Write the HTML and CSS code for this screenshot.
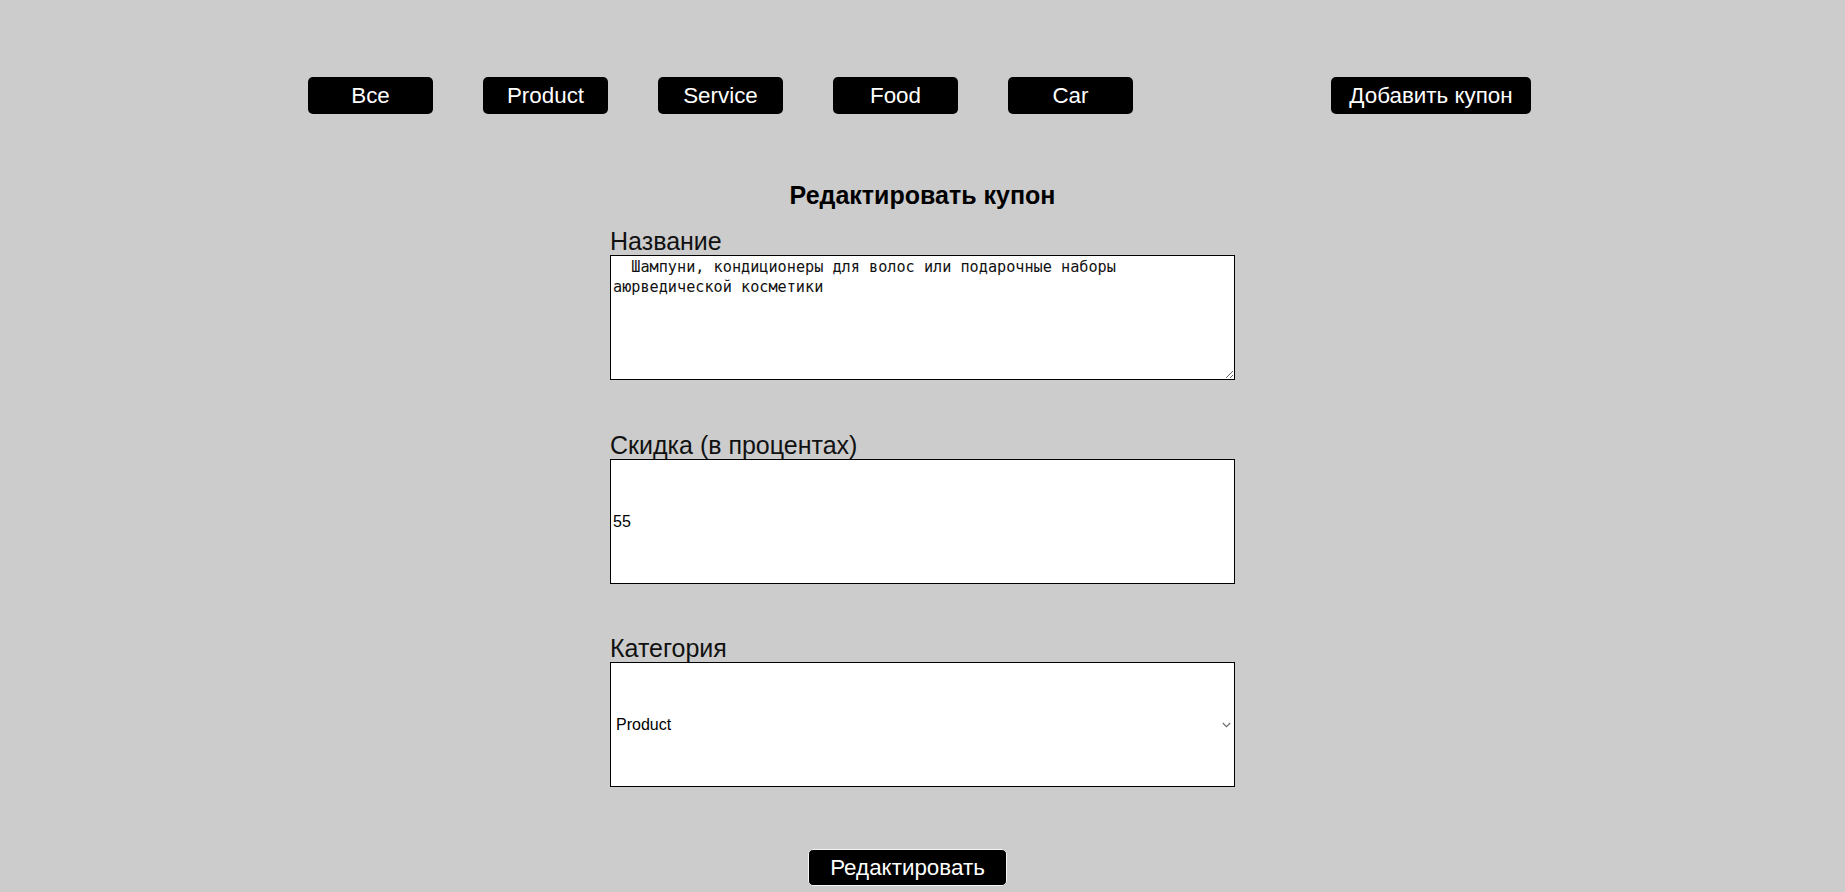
FILE: index.html
```html
<!DOCTYPE html>
<html lang="ru">
<head>
<meta charset="utf-8">
<title>Редактировать купон</title>
<link rel="stylesheet" href="styles.css">
</head>
<body>
<nav class="nav">
  <button class="nav-btn">Все</button>
  <button class="nav-btn">Product</button>
  <button class="nav-btn">Service</button>
  <button class="nav-btn">Food</button>
  <button class="nav-btn">Car</button>
  <button class="nav-btn add-btn">Добавить купон</button>
</nav>
<main class="page">
  <h2 class="title">Редактировать купон</h2>
  <form class="form">
    <label class="label" for="name">Название</label>
    <textarea class="field area" id="name">  Шампуни, кондиционеры для волос или подарочные наборы аюрведической косметики</textarea>
    <label class="label" for="discount">Скидка (в процентах)</label>
    <input class="field input" id="discount" type="text" value="55">
    <label class="label" for="cat">Категория</label>
    <div class="select-wrap">
      <select class="field select" id="cat">
        <option>Product</option>
        <option>Service</option>
        <option>Food</option>
        <option>Car</option>
      </select>
      <svg class="chevron" width="9" height="6" viewBox="0 0 9 6" aria-hidden="true"><path d="M0.8 1 L4.5 4.6 L8.2 1" fill="none" stroke="#6d6d6d" stroke-width="1.2"/></svg>
    </div>
    <div class="actions">
      <button type="button" class="submit">Редактировать</button>
    </div>
  </form>
</main>
</body>
</html>
```
FILE: styles.css
```css
html, body {
  margin: 0;
  padding: 0;
}
body {
  background: #cccccc;
  font-family: "Liberation Sans", Arial, sans-serif;
  color: #000;
  min-height: 892px;
}
.nav {
  display: flex;
  align-items: center;
  gap: 50px;
  padding: 77px 0 0 308px;
}
.nav-btn {
  width: 125px;
  height: 37px;
  padding: 0;
  background: #000;
  color: #fff;
  border: none;
  border-radius: 5px;
  font-family: "Liberation Sans", Arial, sans-serif;
  font-size: 22.4px;
  line-height: 37px;
}
.add-btn {
  width: 200px;
  margin-left: 148px;
}
.page {
  display: flex;
  flex-direction: column;
  align-items: center;
}
.title {
  margin: 67px 0 18px;
  font-size: 25px;
  font-weight: bold;
  line-height: 28px;
}
.form {
  width: 625px;
  display: flex;
  flex-direction: column;
}
.label {
  font-size: 25px;
  line-height: 28px;
  color: #111;
}
.field {
  box-sizing: border-box;
  width: 625px;
  height: 125px;
  border: 1px solid #000;
  background: #fff;
  margin: 0 0 50px;
  border-radius: 0;
}
.area {
  font-family: "DejaVu Sans Mono", monospace;
  font-size: 15.2px;
  line-height: 19.5px;
  padding: 2px;
  color: #111;
  margin-bottom: 51px;
}
.input {
  font-family: "Liberation Sans", Arial, sans-serif;
  font-size: 16px;
  padding: 1px 2px;
  color: #000;
}
.select-wrap {
  position: relative;
  margin-bottom: 62px;
}
.select {
  display: block;
  appearance: none;
  -webkit-appearance: none;
  font-family: "Liberation Sans", Arial, sans-serif;
  font-size: 16px;
  padding: 0 5px;
  margin: 0;
  color: #000;
}
.chevron {
  position: absolute;
  right: 4px;
  top: 60px;
  pointer-events: none;
}
.actions {
  display: flex;
  justify-content: center;
  padding-right: 30px;
}
.submit {
  height: 37px;
  padding: 0 21px;
  background: #000;
  color: #fff;
  border: 1px solid #f4f4f4;
  border-radius: 5px;
  font-family: "Liberation Sans", Arial, sans-serif;
  font-size: 22.4px;
}
```
